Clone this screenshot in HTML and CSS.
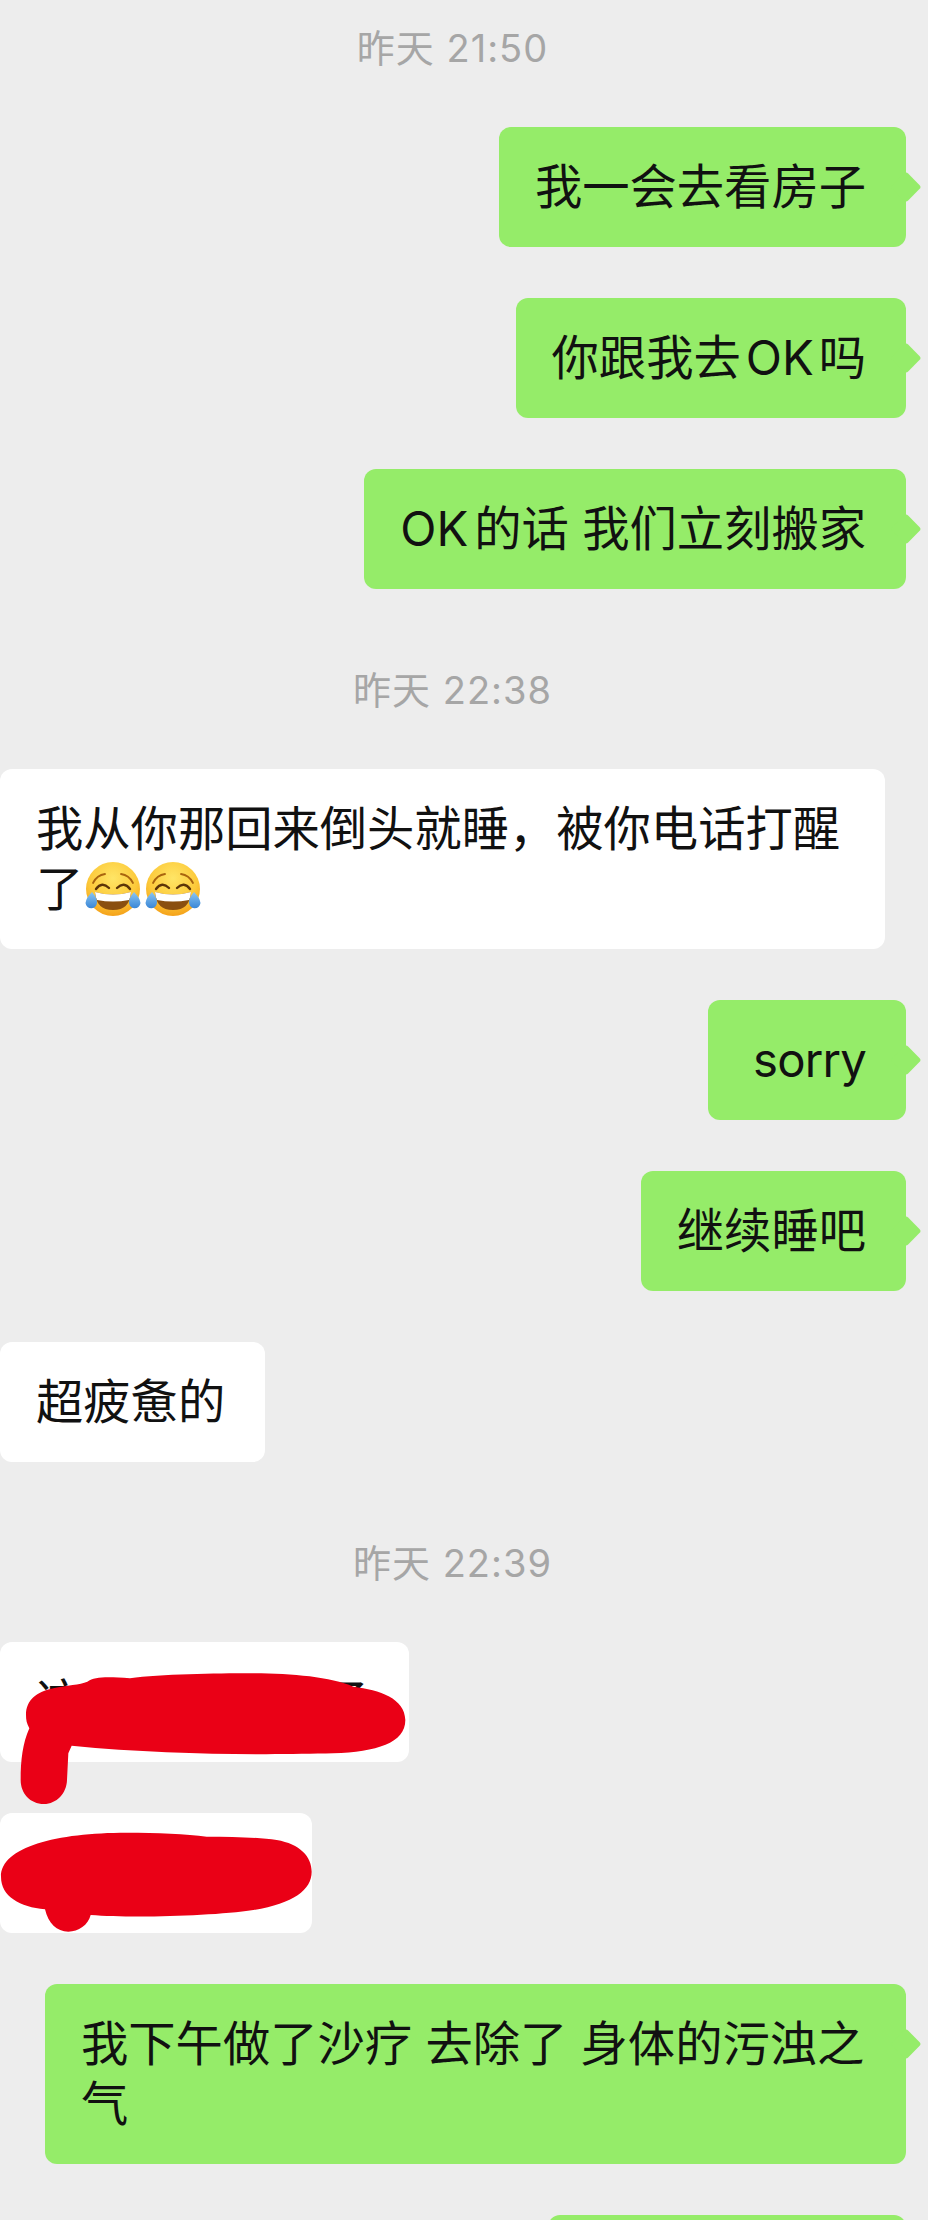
FILE: index.html
```html
<!DOCTYPE html>
<html lang="zh-CN">
<head>
    <meta charset="UTF-8">
    <meta name="viewport" content="width=device-width, initial-scale=1.0">
    <title>聊天记录</title>
    <link rel="stylesheet" href="styles.css">
</head>
<body>
    <!-- emoji used in the chat -->
    <svg class="defs" width="0" height="0" aria-hidden="true">
        <defs>
            <radialGradient id="faceFill" cx="50%" cy="30%" r="75%">
                <stop offset="0%" stop-color="#ffe566"/>
                <stop offset="60%" stop-color="#fcc93a"/>
                <stop offset="100%" stop-color="#f39a14"/>
            </radialGradient>
            <linearGradient id="tearFill" x1="0" y1="0" x2="0" y2="1">
                <stop offset="0%" stop-color="#8ac6f2"/>
                <stop offset="100%" stop-color="#3a86d6"/>
            </linearGradient>
            <symbol id="laughCry" viewBox="0 0 60 60">
                <circle cx="30" cy="30" r="27" fill="url(#faceFill)"/>
                <path d="M10 24 Q14 16 22 15" fill="none" stroke="#a9640f" stroke-width="1.8" stroke-linecap="round"/>
                <path d="M50 24 Q46 16 38 15" fill="none" stroke="#a9640f" stroke-width="1.8" stroke-linecap="round"/>
                <path d="M13 30 Q19 22 26 29" fill="none" stroke="#5c3408" stroke-width="2.4" stroke-linecap="round"/>
                <path d="M34 29 Q41 22 47 30" fill="none" stroke="#5c3408" stroke-width="2.4" stroke-linecap="round"/>
                <path d="M12 33 Q30 38 48 33 Q47 51 30 51 Q13 51 12 33Z" fill="#8a4f10"/>
                <path d="M12 33 Q30 38 48 33 Q47.5 38 46 41 Q30 44 14 41 Q12.5 38 12 33Z" fill="#fff"/>
                <path d="M9 33 Q14 39 14 43 A5.6 5.6 0 0 1 2.5 44 Q3 39 9 33Z" fill="url(#tearFill)"/>
                <path d="M51 33 Q46 39 46 43 A5.6 5.6 0 0 0 57.5 44 Q57 39 51 33Z" fill="url(#tearFill)"/>
            </symbol>
        </defs>
    </svg>

    <div class="chat">
        <div class="time">昨天 21:50</div>
        <div class="msg msg-me"><div class="bubble">我一会去看房子</div></div>
        <div class="msg msg-me"><div class="bubble">你跟我去<span class="latin">OK</span>吗</div></div>
        <div class="msg msg-me"><div class="bubble"><span class="latin-start">OK</span>的话 我们立刻搬家</div></div>

        <div class="time">昨天 22:38</div>
        <div class="msg msg-other">
            <div class="bubble">我从你那回来倒头就睡，被你电话打醒了<svg class="emoji"><use href="#laughCry"/></svg><svg class="emoji"><use href="#laughCry"/></svg></div>
        </div>
        <div class="msg msg-me"><div class="bubble bubble-short">sorry</div></div>
        <div class="msg msg-me"><div class="bubble">继续睡吧</div></div>
        <div class="msg msg-other"><div class="bubble">超疲惫的</div></div>

        <div class="time">昨天 22:39</div>
        <div class="redacted">
            <div class="msg msg-other">
                <div class="bubble">这<span class="hidden-words"></span>了</div>
            </div>
            <div class="msg msg-other">
                <div class="bubble"><span class="hidden-words hidden-words-short"></span></div>
            </div>
            <!-- red marker drawn over the two messages -->
            <svg class="scribble" viewBox="0 0 1380 1020">
                <path d="M78 285C78 240 110 215 160 205C200 195 240 195 262 185C285 170 320 170 390 175C480 162 650 160 750 160C870 160 990 170 1060 200C1140 210 1215 235 1216 300C1216 370 1130 395 1000 400C800 405 500 405 215 377L205 400L201 480C200 520 170 552 132 552C90 552 62 520 62 480C62 420 68 370 88 325C80 310 78 300 78 285Z"/>
                <path d="M3 770C3 680 170 638 380 638C470 638 560 642 620 650C700 650 780 652 830 660C900 672 935 710 935 755C935 810 880 850 760 870C640 888 400 895 272 885C265 915 235 935 205 935C170 935 145 910 135 868C60 860 3 830 3 770Z"/>
            </svg>
        </div>

        <div class="msg msg-me"><div class="bubble">我下午做了沙疗 去除了 身体的污浊之气</div></div>
        <!-- next message, only its top edge is on screen -->
        <div class="msg msg-me"><div class="bubble bubble-cut"></div></div>
    </div>
</body>
</html>
```

FILE: styles.css
```css
* {
    margin: 0;
    padding: 0;
    box-sizing: border-box;
}

html, body {
    height: 2220px;
    overflow: hidden;
}

body {
    background-color: #ededed;
    font-family: "Inter", "Noto Sans CJK SC", sans-serif;
}

.defs {
    display: block;
}

.chat {
    display: flex;
    flex-direction: column;
    gap: 51px;
    padding-top: 24px;
}

.time {
    margin: 26px 0 4px;
    padding-right: 23px;
    color: #a6a6a6;
    font-size: 38px;
    letter-spacing: 1px;
    line-height: 48px;
    text-align: center;
}

.time:first-child {
    margin-top: 0;
}

.msg {
    display: flex;
}

.msg-me {
    justify-content: flex-end;
    padding-left: 45px;
    padding-right: 22px;
}

.msg-other {
    justify-content: flex-start;
    padding-right: 43px;
}

.bubble {
    position: relative;
    padding: 30px 40px 30px 36px;
    border-radius: 12px;
    color: #111;
    font-size: 47.3px;
    line-height: 60px;
}

.msg-other .bubble {
    background: #fff;
}

.msg-me .bubble {
    background: #95ec69;
}

/* little arrow on the right of own messages */
.msg-me .bubble::after {
    content: "";
    position: absolute;
    top: 49px;
    right: -11px;
    width: 22px;
    height: 22px;
    background: #95ec69;
    border-radius: 3px;
    transform: rotate(45deg);
}

.bubble-short {
    min-width: 198px;
    letter-spacing: -0.8px;
    text-align: right;
}

.bubble-cut {
    width: 358px;
    height: 120px;
}

.latin {
    margin: 0 5px;
}

.latin-start {
    margin-right: 6px;
}

.emoji {
    display: inline-block;
    width: 60px;
    height: 60px;
    vertical-align: top;
}

.redacted {
    position: relative;
    display: flex;
    flex-direction: column;
    gap: 51px;
}

.hidden-words {
    display: inline-block;
    width: 238px;
    height: 60px;
    vertical-align: top;
}

.hidden-words-short {
    width: 236px;
}

.scribble {
    position: absolute;
    left: 0;
    top: -22px;
    width: 460px;
    height: 340px;
    fill: #ea0016;
}
```
